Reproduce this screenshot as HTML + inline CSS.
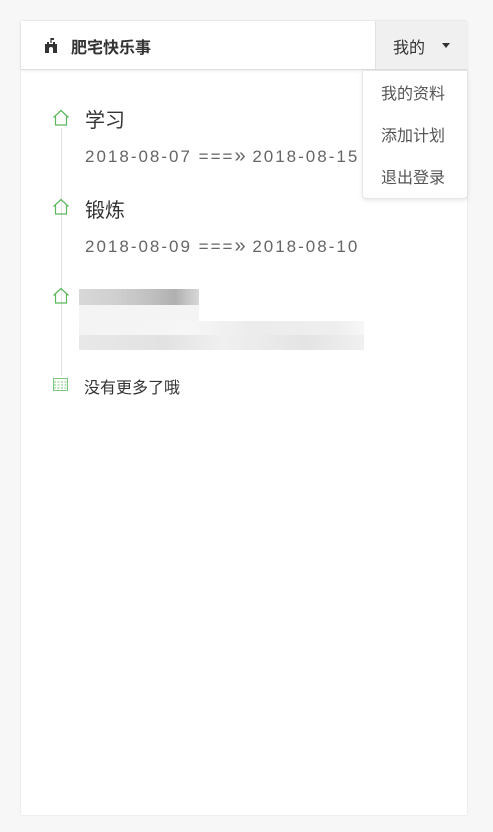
<!DOCTYPE html>
<html><head><meta charset="utf-8"><style>
body{margin:0;background:#f7f7f7;width:493px;height:832px;position:relative;font-family:"Liberation Sans","Noto Sans CJK SC",sans-serif;overflow:hidden}
.card{position:absolute;left:21px;top:21px;width:446px;height:794px;background:#fff;box-shadow:0 0 2px rgba(0,0,0,.12)}
.hdr{position:absolute;left:0;top:0;width:446px;height:48px;border-bottom:1px solid #ddd;box-shadow:0 1px 3px rgba(0,0,0,.08)}
.brand{position:absolute;left:50px;top:13px;font-size:16px;font-weight:bold;color:#333}
.btn{position:absolute;left:354px;top:0;width:92px;height:48px;background:#f0f0f0;border-left:1px solid #e2e2e2}
.btn span{position:absolute;left:17px;top:13px;font-size:16px;color:#333}
.caret{position:absolute;left:66px;top:22px;border-left:4px solid transparent;border-right:4px solid transparent;border-top:5px solid #333}
.dd{position:absolute;left:362px;top:70px;width:104px;height:127px;background:#fff;border:1px solid #e6e6e6;border-radius:0 0 4px 4px;box-shadow:0 2px 4px rgba(0,0,0,.08)}
.dd div{position:absolute;left:18px;font-size:16px;color:#555}
.t{position:absolute;color:#333}
.line{position:absolute;left:61px;top:128px;width:1px;height:248px;background:#e2e2e2}
.d{position:absolute;left:85px;font-size:17px;color:#666;letter-spacing:2px;white-space:nowrap}
.ic{position:absolute;left:52px}
.p{position:absolute}
</style></head><body>
<div class="card">
 <div class="hdr">
  <svg style="position:absolute;left:21px;top:16px" width="18" height="16" viewBox="0 0 18 16"><path d="M3 16V7h2V5h2v2h4V5h2v2h2v9h-4v-4a2 2 0 0 0-4 0v4z" fill="#333"/><path d="M9 1v5" stroke="#333" stroke-width="1.2"/><path d="M9 1h3v2H9z" fill="#333"/></svg>
  <div class="brand">肥宅快乐事</div>
  <div class="btn"><span>我的</span><div class="caret"></div></div>
 </div>
</div>
<div class="line"></div>
<svg class="ic" style="top:109px" width="18" height="17" viewBox="0 0 18 17"><path d="M1.5 8.5L9 1.5l7.5 7M3.5 7v9h11V7" fill="none" stroke="#5cb85c" stroke-width="1.2"/></svg>
<div class="t" style="left:85px;top:104px;font-size:20px">学习</div>
<div class="d" style="top:147px">2018-08-07 ===<span style="font-size:20px;letter-spacing:0;line-height:17px">»</span> 2018-08-15</div>
<svg class="ic" style="top:198px" width="18" height="17" viewBox="0 0 18 17"><path d="M1.5 8.5L9 1.5l7.5 7M3.5 7v9h11V7" fill="none" stroke="#5cb85c" stroke-width="1.2"/></svg>
<div class="t" style="left:85px;top:194px;font-size:20px">锻炼</div>
<div class="d" style="top:237px">2018-08-09 ===<span style="font-size:20px;letter-spacing:0;line-height:17px">»</span> 2018-08-10</div>
<svg class="ic" style="top:287px" width="18" height="17" viewBox="0 0 18 17"><path d="M1.5 8.5L9 1.5l7.5 7M3.5 7v9h11V7" fill="none" stroke="#5cb85c" stroke-width="1.2"/></svg>
<div class="p" style="left:79px;top:289px;width:120px;height:16px;background:linear-gradient(90deg,#d8d8d8,#d0d0d0 30%,#c0c0c0 60%,#b0b0b0 80%,#d8d8d8)"></div>
<div class="p" style="left:79px;top:305px;width:120px;height:16px;background:#f4f4f4"></div>
<div class="p" style="left:79px;top:321px;width:285px;height:14px;background:linear-gradient(90deg,#f3f3f3,#f6f6f6 40%,#ececec 60%,#eeeeee 90%,#f7f7f7)"></div>
<div class="p" style="left:79px;top:335px;width:285px;height:15px;background:linear-gradient(90deg,#e8e8e8,#e2e2e2 30%,#f0f0f0 50%,#e4e4e4 80%,#f0f0f0)"></div>
<svg class="ic" style="top:377px" width="17" height="15" viewBox="0 0 17 15"><rect x="1.5" y="1.5" width="14" height="12" fill="none" stroke="#7cc87c" stroke-width="1"/><path d="M2 5h13M2 8h13M2 11h13" stroke="#7cc87c" stroke-dasharray="2 1.5"/></svg>
<div class="t" style="left:84px;top:374px;font-size:16px">没有更多了哦</div>
<div class="dd"><div style="top:9px">我的资料</div><div style="top:51px">添加计划</div><div style="top:93px">退出登录</div></div>
</body></html>
